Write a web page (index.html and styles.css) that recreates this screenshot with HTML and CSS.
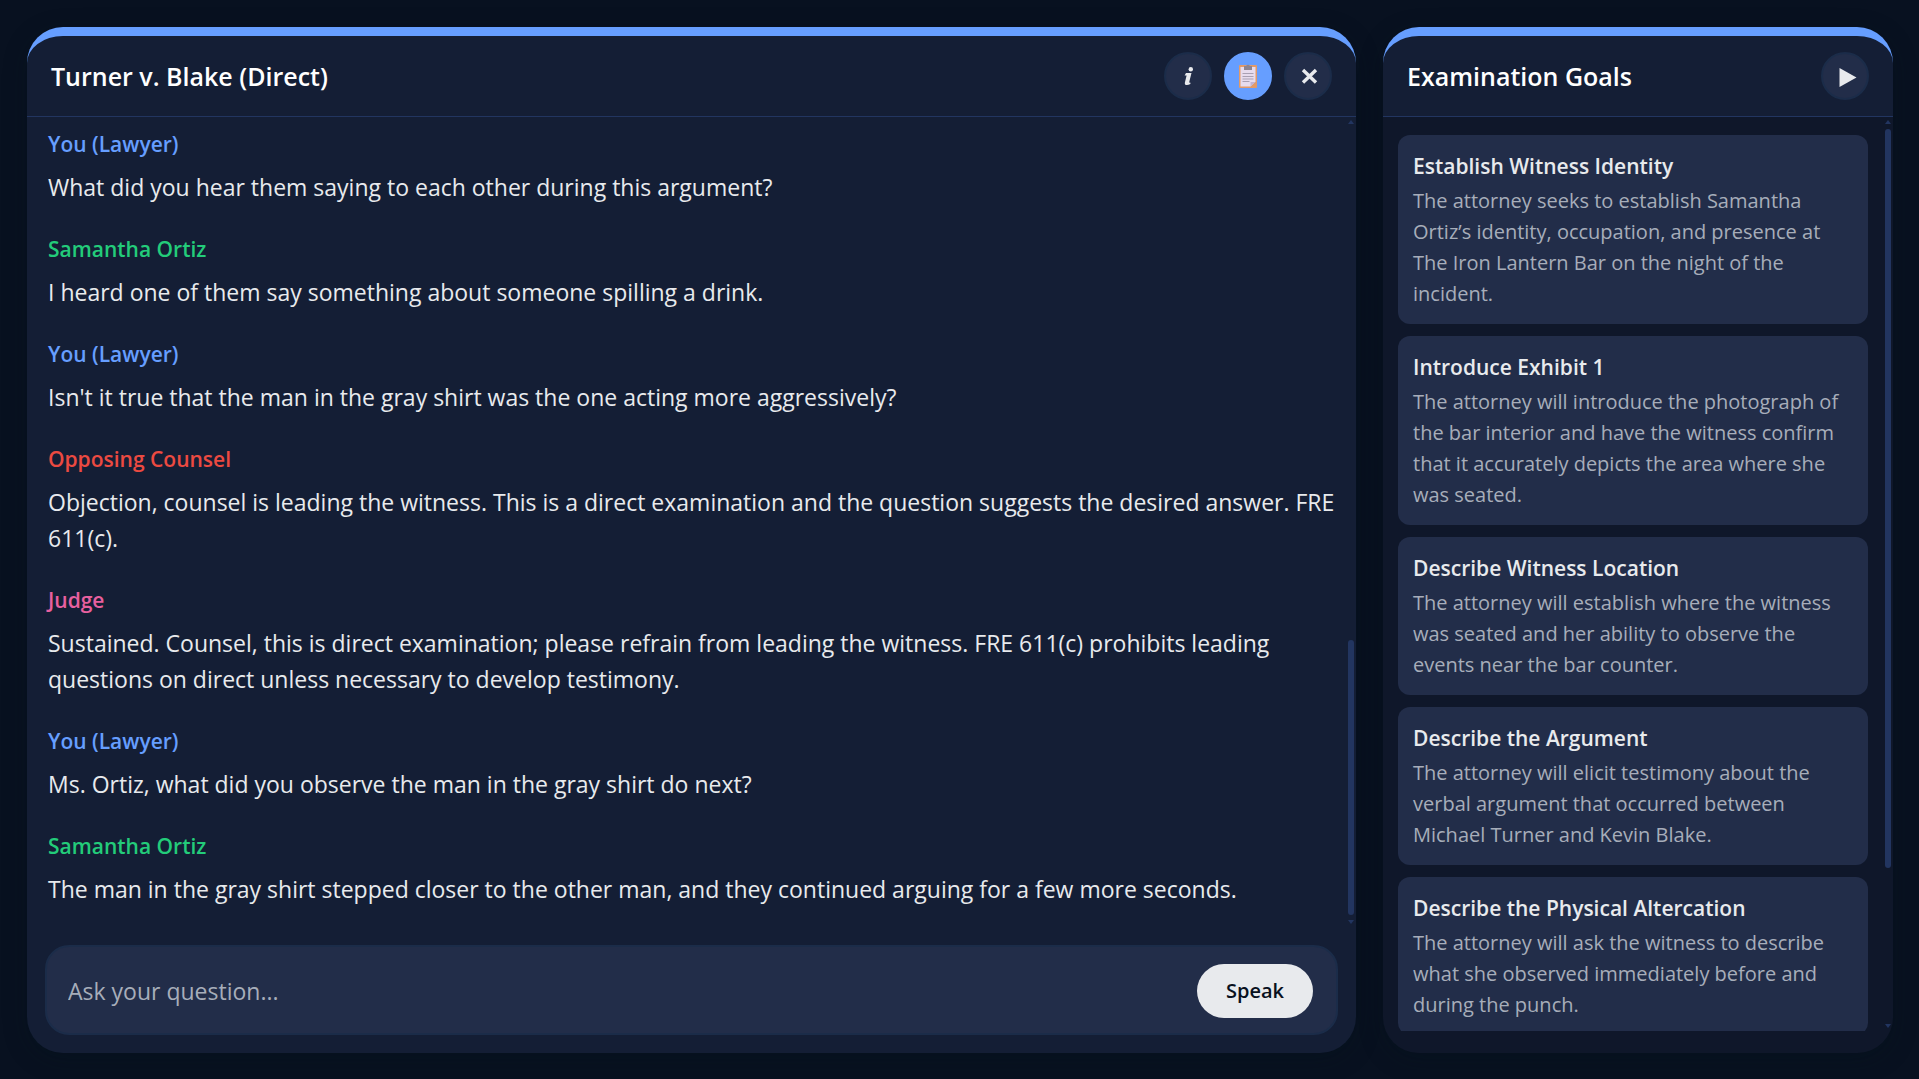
FILE: index.html
```html
<!DOCTYPE html>
<html lang="en">
<head>
  <meta charset="UTF-8">
  <meta name="viewport" content="width=device-width, initial-scale=1.0">
  <title>Turner v. Blake (Direct)</title>
  <link rel="stylesheet" href="styles.css">
</head>
<body>
  <!-- Transcript -->
  <main class="panel chat">
    <header class="panel-header">
      <h1>Turner v. Blake (Direct)</h1>
      <div class="header-buttons">
        <button class="icon-btn" type="button" aria-label="Case info">
          <svg width="24" height="24" viewBox="0 0 24 24" fill="currentColor">
            <circle cx="14.8" cy="5.2" r="2.2"/>
            <path d="M10 9h5.500l-2.200 8.800c-.2.8.3 1 1.300.9l-.3 1.400c-1.200.6-2.300.9-3.300.9-1.700 0-2.500-1-2.100-2.600l1.700-6.800H8.600z"/>
          </svg>
        </button>
        <button class="icon-btn active" type="button" aria-label="Examination goals">
          <svg width="18" height="24" viewBox="0 0 18 24">
            <rect y="1" width="18" height="23" rx="1" fill="#e39a68"/>
            <path d="M1.500 3h15v14.500l-5 5h-10z" fill="#e7dcee"/>
            <path d="M11.500 22.500v-4.500h5z" fill="#c3b4d3"/>
            <path d="M5 2h2.200a1.900 1.900 0 0 1 3.600 0H13v4H5z" fill="#8d8490"/>
            <path d="M3.500 9.500h11M3.500 12.500h11M3.500 15h11M3.500 17.500h7" stroke="#a9a0b3"/>
          </svg>
        </button>
        <button class="icon-btn" type="button" aria-label="Close">
          <svg width="24" height="24" viewBox="0 0 24 24" fill="none" stroke="currentColor" stroke-width="3.400">
            <path d="M7 6l13 12.500M20 6l-13 12.500"/>
          </svg>
        </button>
      </div>
    </header>

    <div class="scroll-area">
      <div class="messages">
        <article class="message">
          <h2 class="lawyer">You (Lawyer)</h2>
          <p>What did you hear them saying to each other during this argument?</p>
        </article>
        <article class="message">
          <h2 class="witness">Samantha Ortiz</h2>
          <p>I heard one of them say something about someone spilling a drink.</p>
        </article>
        <article class="message">
          <h2 class="lawyer">You (Lawyer)</h2>
          <p>Isn't it true that the man in the gray shirt was the one acting more aggressively?</p>
        </article>
        <article class="message">
          <h2 class="opposing">Opposing Counsel</h2>
          <p>Objection, counsel is leading the witness. This is a direct examination and the question suggests the desired answer. FRE 611(c).</p>
        </article>
        <article class="message">
          <h2 class="judge">Judge</h2>
          <p>Sustained. Counsel, this is direct examination; please refrain from leading the witness. FRE 611(c) prohibits leading questions on direct unless necessary to develop testimony.</p>
        </article>
        <article class="message">
          <h2 class="lawyer">You (Lawyer)</h2>
          <p>Ms. Ortiz, what did you observe the man in the gray shirt do next?</p>
        </article>
        <article class="message">
          <h2 class="witness">Samantha Ortiz</h2>
          <p>The man in the gray shirt stepped closer to the other man, and they continued arguing for a few more seconds.</p>
        </article>
      </div>
      <div class="scrollbar at-end" aria-hidden="true">
        <span class="arrow up"></span>
        <div class="track"><div class="thumb" style="height: 35%"></div></div>
        <span class="arrow down"></span>
      </div>
    </div>

    <form class="composer">
      <input type="text" placeholder="Ask your question..." aria-label="Ask your question">
      <button class="speak-btn" type="button">Speak</button>
    </form>
  </main>

  <!-- Goals -->
  <aside class="panel goals">
    <header class="panel-header">
      <h1>Examination Goals</h1>
      <button class="icon-btn" type="button" aria-label="Collapse goals">
        <svg width="24" height="24" viewBox="0 0 24 24" fill="currentColor">
          <path d="M6.500 4l17 9.500-17 9.500z"/>
        </svg>
      </button>
    </header>

    <div class="scroll-area">
      <ul class="goal-list">
        <li class="goal">
          <h2>Establish Witness Identity</h2>
          <p>The attorney seeks to establish Samantha Ortiz’s identity, occupation, and presence at The Iron Lantern Bar on the night of the incident.</p>
        </li>
        <li class="goal">
          <h2>Introduce Exhibit 1</h2>
          <p>The attorney will introduce the photograph of the bar interior and have the witness confirm that it accurately depicts the area where she was seated.</p>
        </li>
        <li class="goal">
          <h2>Describe Witness Location</h2>
          <p>The attorney will establish where the witness was seated and her ability to observe the events near the bar counter.</p>
        </li>
        <li class="goal">
          <h2>Describe the Argument</h2>
          <p>The attorney will elicit testimony about the verbal argument that occurred between Michael Turner and Kevin Blake.</p>
        </li>
        <li class="goal">
          <h2>Describe the Physical Altercation</h2>
          <p>The attorney will ask the witness to describe what she observed immediately before and during the punch.</p>
        </li>
      </ul>
      <div class="scrollbar" aria-hidden="true">
        <span class="arrow up"></span>
        <div class="track"><div class="thumb" style="height: 83%"></div></div>
        <span class="arrow down"></span>
      </div>
    </div>
  </aside>
</body>
</html>
```
FILE: styles.css
```css
* {
  margin: 0;
  padding: 0;
  box-sizing: border-box;
}

:root {
  --bg: #081120;
  --panel: #141e35;
  --panel-dark: #0f172a;
  --card: #222d49;
  --line: #223560;
  --ring: #1b2c49;
  --accent: #669eff;
  --text: #e8eaed;
  --muted: #a7adba;
}

body {
  height: 100vh;
  padding: 27px 26px 26px 27px;
  display: flex;
  gap: 27px;
  background: var(--bg);
  color: var(--text);
  font-family: "Segoe UI", "Open Sans", "Noto Sans", sans-serif;
  font-size: 23px;
  line-height: 36px;
}

button,
input {
  font: inherit;
  color: inherit;
  border: none;
}

/* Panels */
.panel {
  display: flex;
  flex-direction: column;
  min-width: 0;
  background: var(--panel);
  border-top: 9px solid var(--accent);
  border-radius: 36px;
  box-shadow: 0 6px 24px rgba(0, 20, 28, 0.3);
}

.chat {
  flex: 1;
}

.goals {
  flex: 0 0 510px;
  padding-bottom: 22px;
  background: linear-gradient(var(--panel) 80px, var(--panel-dark) 80px);
}

.panel-header {
  display: flex;
  align-items: center;
  justify-content: space-between;
  padding: 16px 24px;
  border-bottom: 1px solid var(--line);
}

.panel-header h1 {
  color: #fff;
  font-size: 25px;
  font-weight: 600;
}

.header-buttons {
  display: flex;
  gap: 12px;
}

.icon-btn {
  width: 48px;
  height: 48px;
  display: flex;
  align-items: center;
  justify-content: center;
  background: var(--card);
  border: 2px solid var(--ring);
  border-radius: 50%;
  cursor: pointer;
}

.icon-btn.active {
  background: var(--accent);
  border-color: var(--accent);
}

/* Scrolling areas */
.scroll-area {
  flex: 1;
  min-height: 0;
  display: flex;
  overflow: hidden;
}

.scrollbar {
  flex: 0 0 10px;
  display: flex;
  flex-direction: column;
  align-items: center;
  gap: 5px;
  padding: 3px 2px;
}

.track {
  flex: 1;
  display: flex;
  flex-direction: column;
}

.at-end .track {
  justify-content: flex-end;
}

.thumb {
  width: 6px;
  background: var(--line);
  border-radius: 3px;
}

.arrow {
  border: 3px solid transparent;
}

.arrow.up {
  border-top: none;
  border-bottom: 4px solid var(--line);
}

.arrow.down {
  border-bottom: none;
  border-top: 4px solid var(--line);
}

/* Transcript */
.messages {
  flex: 1;
  display: flex;
  flex-direction: column;
  justify-content: flex-end;
  gap: 28px;
  padding: 0 4px 20px 21px;
}

.message h2 {
  margin-bottom: 8px;
  font-size: 21px;
  font-weight: 600;
  line-height: 33px;
}

.lawyer {
  color: #669eff;
}

.witness {
  color: #23cc7a;
}

.opposing {
  color: #ec4a41;
}

.judge {
  color: #e8609f;
}

/* Composer */
.composer {
  display: flex;
  align-items: center;
  margin: 18px;
  padding: 17px 23px 15px 21px;
  background: var(--card);
  border: 2px solid var(--ring);
  border-radius: 24px;
}

.composer input {
  flex: 1;
  min-width: 0;
  background: transparent;
  outline: none;
}

.composer input::placeholder {
  color: var(--muted);
  opacity: 1;
}

.speak-btn {
  height: 54px;
  padding: 0 29px;
  background: var(--text);
  border-radius: 27px;
  color: var(--bg);
  font-size: 20px;
  font-weight: 600;
  cursor: pointer;
}

/* Goals */
.goal-list {
  flex: 1;
  display: flex;
  flex-direction: column;
  gap: 12px;
  padding: 18px 15px 0;
  list-style: none;
}

.goal {
  flex: none;
  padding: 15px;
  background: var(--card);
  border-radius: 12px;
}

.goal h2 {
  margin-bottom: 3px;
  font-size: 21px;
  font-weight: 600;
  line-height: 32px;
}

.goal p {
  color: var(--muted);
  font-size: 20px;
  line-height: 31px;
}
```
